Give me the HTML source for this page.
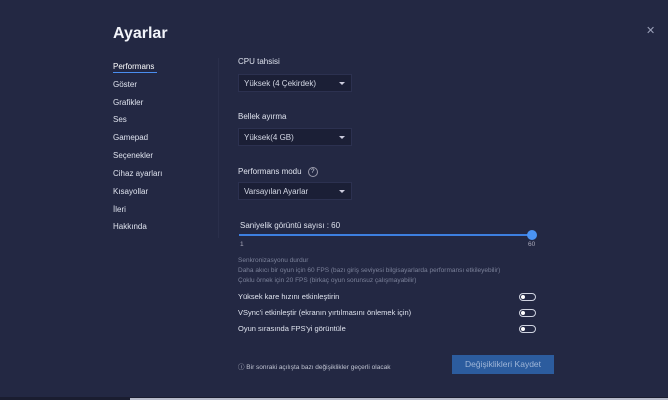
<!DOCTYPE html><html><head><meta charset="utf-8"><style>
body{margin:0;width:668px;height:400px;background:#232843;font-family:"Liberation Sans",sans-serif;color:#e6e9f2;position:relative;overflow:hidden}
.a{position:absolute;white-space:nowrap}
.t{font-size:8px;color:#dfe3ee}
.dd{position:absolute;left:238px;width:114px;height:18px;background:#1b1f36;border:1px solid #2c3150;box-sizing:border-box;font-size:8px;color:#d5d9e6;line-height:17px;padding-left:5px}
.dd:after{content:"";position:absolute;right:6px;top:7px;border:3px solid transparent;border-top:3px solid #ccd;}
.sm{font-size:6.5px;color:#7b8199}
.tg{position:absolute;left:519px;width:17px;height:8px;border:1px solid #cfd3e0;border-radius:5px;box-sizing:border-box}
.tg:before{content:"";position:absolute;left:1px;top:1px;width:4px;height:4px;border-radius:50%;background:#fff}
</style></head><body>
<div class="a" style="left:113px;top:25px;font-size:16px;font-weight:bold;color:#f2f4fa">Ayarlar</div>
<div class="a t" style="left:113px;top:62px;color:#fff">Performans</div>
<div class="a" style="left:113px;top:72px;width:44px;height:1px;background:#4a8ef0"></div>
<div class="a t" style="left:113px;top:80px">Göster</div>
<div class="a t" style="left:113px;top:98px">Grafikler</div>
<div class="a t" style="left:113px;top:115px">Ses</div>
<div class="a t" style="left:113px;top:133px">Gamepad</div>
<div class="a t" style="left:113px;top:151px">Seçenekler</div>
<div class="a t" style="left:113px;top:169px">Cihaz ayarları</div>
<div class="a t" style="left:113px;top:187px">Kısayollar</div>
<div class="a t" style="left:113px;top:205px">İleri</div>
<div class="a t" style="left:113px;top:222px">Hakkında</div>
<div class="a" style="left:218px;top:58px;width:1px;height:180px;background:#2a2f4b"></div>
<div class="a t" style="left:238px;top:57px">CPU tahsisi</div>
<div class="dd" style="top:74px">Yüksek (4 Çekirdek)</div>
<div class="a t" style="left:238px;top:112px">Bellek ayırma</div>
<div class="dd" style="top:128px">Yüksek(4 GB)</div>
<div class="a t" style="left:238px;top:167px">Performans modu <span style="display:inline-block;width:8px;height:8px;border:1px solid #99a;border-radius:50%;font-size:6px;text-align:center;line-height:8px;margin-left:4px;vertical-align:middle">?</span></div>
<div class="dd" style="top:182px">Varsayılan Ayarlar</div>
<div class="a t" style="left:240px;top:221px">Saniyelik görüntü sayısı : 60</div>
<div class="a" style="left:239px;top:234px;width:293px;height:2px;background:#3d7fe0"></div>
<div class="a" style="left:527px;top:230px;width:10px;height:10px;border-radius:50%;background:#4a93f3"></div>
<div class="a sm" style="left:240px;top:241px;color:#aab">1</div>
<div class="a sm" style="left:528px;top:241px;color:#aab">60</div>
<div class="a sm" style="left:238px;top:257px">Senkronizasyonu durdur</div>
<div class="a sm" style="left:238px;top:267px">Daha akıcı bir oyun için 60 FPS (bazı giriş seviyesi bilgisayarlarda performansı etkileyebilir)</div>
<div class="a sm" style="left:238px;top:277px">Çoklu örnek için 20 FPS (birkaç oyun sorunsuz çalışmayabilir)</div>
<div class="a t" style="left:238px;top:292px;font-size:7.5px">Yüksek kare hızını etkinleştirin</div>
<div class="a t" style="left:238px;top:308px;font-size:7.5px">VSync'i etkinleştir (ekranın yırtılmasını önlemek için)</div>
<div class="a t" style="left:238px;top:324px;font-size:7.5px">Oyun sırasında FPS'yi görüntüle</div>
<div class="tg" style="top:293px"></div><div class="tg" style="top:309px"></div><div class="tg" style="top:325px"></div>
<div class="a sm" style="left:238px;top:361px;color:#c0c4d2">ⓘ Bir sonraki açılışta bazı değişiklikler geçerli olacak</div>
<div class="a" style="left:452px;top:355px;width:102px;height:19px;background:#2c5c9e;color:#9fb6d8;font-size:8.5px;text-align:center;line-height:19px">Değişiklikleri Kaydet</div>
<div class="a" style="left:646px;top:24px;font-size:11px;color:#9aa0b8">✕</div>
<div class="a" style="left:0;top:397px;width:668px;height:3px;background:#1a1d30"></div>
<div class="a" style="left:130px;top:398px;width:538px;height:2px;background:#b8bccb"></div>
</body></html>
